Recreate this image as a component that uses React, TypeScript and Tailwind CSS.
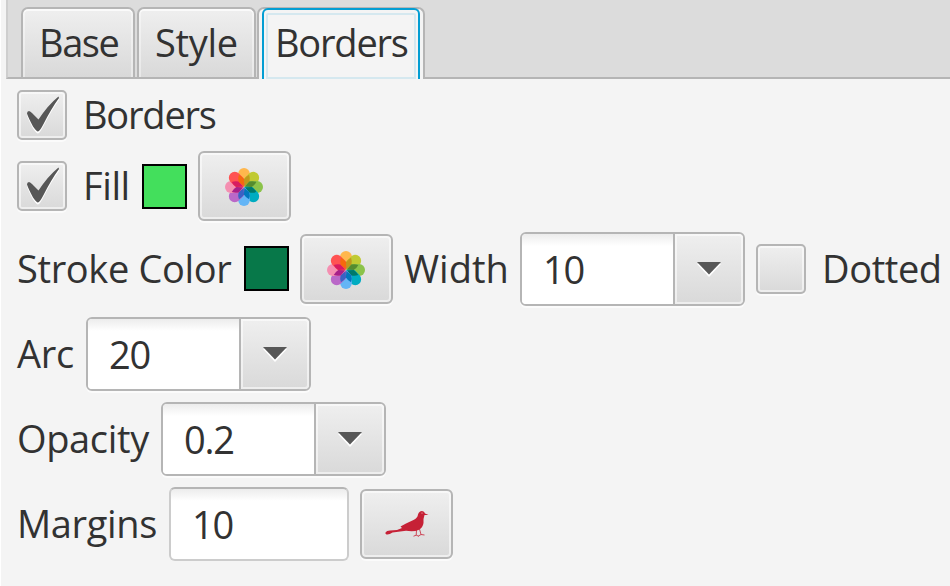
import type { ReactNode } from "react";

function Label({ children, className }: { children: ReactNode; className: string }) {
  return <span className={`block shrink-0 whitespace-nowrap leading-[54px] ${className}`}>{children}</span>;
}

const raised =
  "shrink-0 border-2 border-[#b5b5b5] bg-linear-to-b from-[#efefef] to-[#d9d9d9] shadow-[inset_0_0_0_2px_rgba(255,255,255,0.55),0_2px_0_#fbfbfb]";

const checkPath =
  "M8 21.5 Q8 19 10 19 Q11.5 19.3 13 21 L19.500 27.500 Q29 13 39.500 4.500 L40 6 Q32 17 24 33 Q20.500 39.500 19 39.500 Q17.500 39.500 14 34.500 Q9 25 8 21.500Z";

function CheckBox({ checked }: { checked?: boolean }) {
  return (
    <span className={`block size-[50px] rounded-[5px] ${raised}`}>
      {checked && (
        <svg viewBox="0 0 46 46" className="block size-[46px]">
          <path d={checkPath} fill="#fff" transform="translate(0 2)" />
          <path d={checkPath} fill="#575757" />
        </svg>
      )}
    </span>
  );
}

function Button({ children }: { children: ReactNode }) {
  return (
    <button className={`flex h-[70px] w-[93px] items-center justify-center rounded-[6px] ${raised}`}>{children}</button>
  );
}

const petals = [
  { angle: 0, color: "#ffb74d" },
  { angle: 45, color: "#c0ca33" },
  { angle: 90, color: "#8bc34a" },
  { angle: 135, color: "#00acc1" },
  { angle: 180, color: "#64b5f6" },
  { angle: 225, color: "#ba68c8" },
  { angle: 270, color: "#f48fb1" },
  { angle: 315, color: "#ff5252" },
];

const overlaps = [
  { angle: 22.5, color: "#c0981c" },
  { angle: 67.5, color: "#558b2f" },
  { angle: 112.5, color: "#00796b" },
  { angle: 157.5, color: "#0277bd" },
  { angle: 202.5, color: "#3a62c4" },
  { angle: 247.5, color: "#a8208a" },
  { angle: 292.5, color: "#d81b60" },
  { angle: 337.5, color: "#f56a0c" },
];

function Flower() {
  return (
    <svg viewBox="-20 -20 40 40" className="mr-px mt-px block size-10">
      {petals.map((p) => (
        <rect key={p.angle} x="-5.900" y="-19" width="11.800" height="18.500" rx="5.900" fill={p.color} transform={`rotate(${p.angle})`} />
      ))}
      {overlaps.map((p) => (
        <path key={p.angle} d="M0 -1 L-3 -7 Q-2.500 -10.500 0 -13.300 Q2.500 -10.500 3 -7Z" fill={p.color} transform={`rotate(${p.angle})`} />
      ))}
    </svg>
  );
}

function Bird() {
  return (
    <svg viewBox="0 0 44 28" className="block h-7 w-11">
      <g fill="#c62136">
        <path d="M.5 22.500 Q1.500 20.800 5 20.600 L12 20 L17 18 L15.500 16.500 L21 13.500 L29 9.800 Q32.500 8 33 4.500 Q34 1 37 1 Q39.500 1.200 40 3.500 L43.500 5 L39.500 5 Q38 9 38.500 13 Q37.800 18 33.500 20 Q29 22 21 20.800 L7.500 22.600 Q4 25 1.500 24.500 Q0 24 .5 22.500Z" />
        <path d="M31.500 20 L31.200 25 M34.500 19 L36 24.500 M28.500 26.200 L31.200 25.200 L34 26.300 M33.500 26 L36 24.500 L39.500 25" fill="none" stroke="#c62136" strokeWidth=".8" />
      </g>
      <circle cx="37" cy="3" r=".6" fill="#f1c5cb" />
    </svg>
  );
}

function ComboBox({ value }: { value: string }) {
  return (
    <div className="flex h-[74px] w-[225px] shrink-0 overflow-hidden rounded-[6px] border-2 border-[#b5b5b5] bg-white shadow-[0_2px_0_#fbfbfb]">
      <div className="w-[151px] bg-linear-to-b from-[#ececec] to-white to-[12px] pl-[21px]">
        <Label className="pt-[8px] tracking-[-1.2px]">{value}</Label>
      </div>
      <div className="flex flex-1 items-center justify-center rounded-r-[4px] border-l-2 border-[#b5b5b5] bg-linear-to-b from-[#efefef] to-[#d9d9d9] shadow-[inset_0_0_0_2px_rgba(255,255,255,0.55)]">
        <svg viewBox="0 0 24 16" className="mb-px block h-4 w-6">
          <path d="M0 3 H24 L12 16Z" fill="#fff" />
          <path d="M0 1 H24 L12 13.500Z" fill="#575757" />
        </svg>
      </div>
    </div>
  );
}

const tab =
  "h-[70px] shrink-0 rounded-t-[7px] border-2 border-b-0 border-[#b5b5b5] bg-linear-to-b from-[#efefef] to-[#d9d9d9] shadow-[inset_0_2px_0_#fafafa,inset_2px_0_0_rgba(255,255,255,0.4),inset_-2px_0_0_rgba(255,255,255,0.4)]";

export default function App() {
  return (
    <div className="h-[586px] w-[950px] overflow-hidden border-l border-white bg-[#f4f4f4] font-['Open_Sans',sans-serif] text-[38px] text-[#323232]">
      <div className="ml-[5px] flex h-[79px] border-b-2 border-l-2 border-b-[#b5b5b5] border-l-[#cecece] bg-[#dcdcdc] pl-[13px] pt-[7px]">
        <div className={`w-[114px] pl-[16px] pt-[6px] ${tab}`}>
          <Label className="tracking-[-1.400px]">Base</Label>
        </div>
        <div className={`ml-[2px] w-[119px] pl-[16px] pt-[6px] ${tab}`}>
          <Label className="tracking-[-0.300px]">Style</Label>
        </div>
        <div className="ml-px h-[72px] w-[168px] shrink-0 rounded-t-[7px] border-2 border-b-0 border-[#b5b5b5] bg-[#f4f4f4] px-[3px]">
          <div className="-mt-px h-[71px] rounded-t-[6px] border-2 border-b-0 border-[#039ed3] px-[2px] pt-[3px]">
            <div className="h-[66px] rounded-t-[2px] border-2 border-[#d5e8ef] pl-[7px]">
              <Label className="tracking-[-1.200px]">Borders</Label>
            </div>
          </div>
        </div>
      </div>

      <div className="flex flex-col gap-[11px] pl-[16px] pt-[11px]">
        <div className="flex h-[50px] items-center">
          <CheckBox checked />
          <Label className="-mt-[2px] ml-[16px] tracking-[-1.200px]">Borders</Label>
        </div>

        <div className="flex h-[70px] items-center">
          <CheckBox checked />
          <Label className="-mt-[2px] ml-[16px] w-[48px] tracking-[-0.400px]">Fill</Label>
          <span className="ml-[11px] block size-[45px] shrink-0 border-2 border-black bg-[#43df5c]" />
          <div className="ml-[11px]">
            <Button><Flower /></Button>
          </div>
        </div>

        <div className="flex h-[74px] items-center gap-[11px]">
          <Label className="-mt-[2px] w-[216px] tracking-[-0.350px]">Stroke Color</Label>
          <span className="-mt-px block size-[45px] shrink-0 border-2 border-black bg-[#077849]" />
          <Button><Flower /></Button>
          <Label className="-mt-[2px] w-[105px]">Width</Label>
          <ComboBox value="10" />
          <CheckBox />
          <Label className="-mt-[2px] ml-[5px] tracking-[-0.400px]">Dotted</Label>
        </div>

        <div className="flex h-[74px] items-center gap-[11px]">
          <Label className="-mt-[2px] w-[58px] tracking-[-0.300px]">Arc</Label>
          <ComboBox value="20" />
        </div>

        <div className="flex h-[74px] items-center gap-[11px]">
          <Label className="-mt-[2px] w-[133px] tracking-[-0.350px]">Opacity</Label>
          <ComboBox value="0.2" />
        </div>

        <div className="flex h-[74px] items-center gap-[11px]">
          <Label className="-mt-[2px] w-[141px] tracking-[-0.350px]">Margins</Label>
          <div className="h-[74px] w-[180px] shrink-0 rounded-[6px] border-2 border-[#cccccc] border-t-[#b5b5b5] bg-linear-to-b from-[#ececec] to-white to-[12px] pl-[21px]">
            <Label className="pt-[8px] tracking-[-1.200px]">10</Label>
          </div>
          <Button><Bird /></Button>
        </div>
      </div>
    </div>
  );
}
